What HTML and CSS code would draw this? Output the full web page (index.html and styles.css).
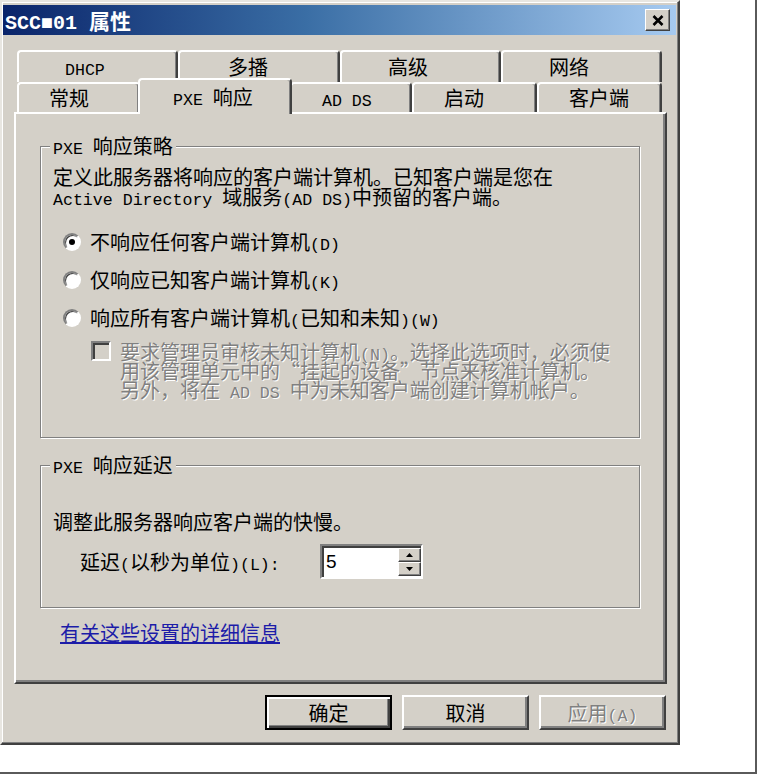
FILE: index.html
```html
<!DOCTYPE html>
<html lang="zh-CN">
<head>
<meta charset="utf-8">
<title>SCC■01 属性</title>
<link rel="stylesheet" href="styles.css">
</head>
<body>
<div class="frame">
  <div class="dialog">
    <div class="titlebar">
      <span class="title"><span class="m">SCC■01 </span>属性</span>
      <button class="close" aria-label="关闭">
        <svg width="12" height="11" viewBox="0 0 12 11"><path d="M1.5 1 L10.5 10 M10.5 1 L1.5 10" stroke="#000" stroke-width="2.6" fill="none"/></svg>
      </button>
    </div>

    <div class="tabs">
      <div class="tabrow back">
        <div class="tab"><span><span class="m">DHCP</span></span></div>
        <div class="tab"><span>多播</span></div>
        <div class="tab"><span>高级</span></div>
        <div class="tab"><span>网络</span></div>
      </div>
      <div class="tabrow front">
        <div class="tab t-general"><span>常规</span></div>
        <div class="tab t-pxe active"><span><span class="m">PXE </span>响应</span></div>
        <div class="tab t-adds"><span><span class="m">AD DS</span></span></div>
        <div class="tab t-boot"><span>启动</span></div>
        <div class="tab t-client"><span>客户端</span></div>
      </div>
    </div>

    <div class="panel">
      <div class="group g1">
        <div class="legend"><span class="m">PXE </span>响应策略</div>
        <div class="desc">定义此服务器将响应的客户端计算机。已知客户端是您在<br><span class="m">Active Directory </span>域服务<span class="m">(AD DS)</span>中预留的客户端。</div>
        <div class="radio first"><span class="rb on"></span><span>不响应任何客户端计算机<span class="m">(D)</span></span></div>
        <div class="radio"><span class="rb"></span><span>仅响应已知客户端计算机<span class="m">(K)</span></span></div>
        <div class="radio"><span class="rb"></span><span>响应所有客户端计算机<span class="m">(</span>已知和未知<span class="m">)(W)</span></span></div>
        <div class="check">
          <span class="cb"></span>
          <span class="check-text">要求管理员审核未知计算机<span class="m">(N)</span>。选择此选项时，必须使<br>用该管理单元中的“挂起的设备”节点来核准计算机。<br>另外，将在<span class="m"> AD DS </span>中为未知客户端创建计算机帐户。</span>
        </div>
      </div>

      <div class="group g2">
        <div class="legend"><span class="m">PXE </span>响应延迟</div>
        <div class="desc2">调整此服务器响应客户端的快慢。</div>
        <div class="delay">
          <label class="delay-label">延迟<span class="m">(</span>以秒为单位<span class="m">)(L):</span></label>
          <div class="spin">
            <span class="spin-value">5</span>
            <div class="spin-btns">
              <span class="spin-btn"><svg width="7" height="4" viewBox="0 0 7 4"><polygon points="3.5,0 7,4 0,4" fill="#000"/></svg></span>
              <span class="spin-btn"><svg width="7" height="4" viewBox="0 0 7 4"><polygon points="0,0 7,0 3.5,4" fill="#000"/></svg></span>
            </div>
          </div>
        </div>
      </div>

      <a class="link" href="#">有关这些设置的详细信息</a>
    </div>

    <div class="buttons">
      <button class="btn default">确定</button>
      <button class="btn">取消</button>
      <button class="btn" disabled>应用<span class="m">(A)</span></button>
    </div>
  </div>
</div>
</body>
</html>
```

FILE: styles.css
```css
* { box-sizing: border-box; }

html, body {
  margin: 0;
  padding: 0;
  background: #fff;
}

body {
  font-family: "Noto Sans CJK SC", "Noto Sans", sans-serif;
  font-size: 20px;
  line-height: 20px;
  color: #000;
}

.m {
  font-family: "Liberation Mono", "DejaVu Sans Mono", monospace;
  font-size: 16.6px;
  line-height: 10px;
}

.frame {
  width: 757px;
  height: 774px;
  border-right: 2px solid #5a5a5a;
  border-bottom: 2px solid #5a5a5a;
  background: #fff;
}

.dialog {
  width: 680px;
  height: 745px;
  background: #d4d0c8;
  border: 2px solid;
  border-color: #e8e6e1 #404040 #404040 #e8e6e1;
  box-shadow: inset -1px -1px 0 #808080, inset 1px 1px 0 #fff;
  padding: 3px 2px 0 1px;
}

/* title bar */
.titlebar {
  height: 30px;
  display: flex;
  align-items: center;
  justify-content: space-between;
  padding: 0 6px 0 2px;
  background: linear-gradient(to right, #0a246a 0%, #3a6ea5 45%, #a6caf0 100%);
}

.title {
  color: #fff;
  font-weight: 700;
  font-size: 21px;
  white-space: nowrap;
}

.title .m {
  font-size: 20px;
}

.close {
  width: 25px;
  height: 22px;
  padding: 0;
  background: #d4d0c8;
  border: 1px solid;
  border-color: #fff #404040 #404040 #fff;
  box-shadow: inset -1px -1px 0 #808080;
  display: flex;
  align-items: center;
  justify-content: center;
}

/* tabs */
.tabs {
  margin: 15px 0 0 14px;
  width: 645px;
}

.tabrow {
  display: flex;
}

.tabrow.back { height: 32px; }
.tabrow.front { height: 30px; }

.tab {
  height: 100%;
  display: flex;
  align-items: center;
  background: #d4d0c8;
  border-top: 2px solid #fff;
  border-left: 2px solid #fff;
  border-right: 2px solid #404040;
  box-shadow: inset -1px 0 0 #808080;
  border-radius: 4px 4px 0 0;
  white-space: nowrap;
}

.back .tab {
  width: 161px;
  padding-left: 46px;
}

.back .tab:nth-child(2) { width: 162px; padding-left: 48px; }

.front .tab { padding-left: 30px; }

.t-general { width: 123px; }
.t-adds { width: 122px; padding-left: 26px; }
.t-boot { width: 125px; }
.t-client { width: 125px; }

.tab.active {
  width: 154px;
  height: 36px;
  margin: -4px -2px 0;
  padding-left: 33px;
  position: relative;
  z-index: 2;
}

/* panel */
.panel {
  margin-left: 11px;
  width: 653px;
  height: 572px;
  border: 2px solid;
  border-color: #fff #404040 #404040 #fff;
  box-shadow: inset -2px -2px 0 #808080;
  padding: 0 0 0 24px;
}

.group {
  width: 600px;
  border: 1px solid #808080;
  box-shadow: 1px 1px 0 #fff, inset 1px 1px 0 #fff;
  padding: 0 0 0 12px;
}

.g1 {
  margin-top: 32px;
  padding-bottom: 38px;
}

.g2 {
  margin-top: 27px;
  padding-bottom: 28px;
}

.legend {
  display: table;
  margin: -11px 0 0 -3px;
  padding: 0 3px;
  background: #d4d0c8;
  white-space: nowrap;
}

.desc {
  margin-top: 11px;
  white-space: nowrap;
}

.radio {
  display: flex;
  align-items: center;
  height: 20px;
  margin: 18px 0 0 10px;
  white-space: nowrap;
}

.radio.first { margin-top: 25px; }

.rb {
  flex: none;
  width: 18px;
  height: 18px;
  margin-right: 9px;
  border-radius: 50%;
  background: #fff;
  border: 2px solid;
  border-color: #808080 #fff #fff #808080;
  box-shadow: inset 1px 1px 0 #404040;
  display: flex;
  align-items: center;
  justify-content: center;
}

.rb.on::after {
  content: "";
  width: 6px;
  height: 6px;
  border-radius: 50%;
  background: #000;
}

.check {
  display: flex;
  align-items: flex-start;
  margin: 14px 0 0 38px;
}

.cb {
  flex: none;
  width: 20px;
  height: 20px;
  margin: -1px 9px 0 0;
  background: #d4d0c8;
  border: 2px solid;
  border-color: #808080 #fff #fff #808080;
  box-shadow: inset 2px 2px 0 #404040, inset -1px -1px 0 #d4d0c8;
}

.check-text {
  color: #808080;
  text-shadow: 1px 1px 0 #fff;
  line-height: 19px;
  white-space: nowrap;
}

.desc2 {
  margin-top: 37px;
  white-space: nowrap;
}

.delay {
  display: flex;
  align-items: center;
  height: 35px;
  margin: 12px 0 0 27px;
}

.delay-label {
  width: 240px;
  white-space: nowrap;
}

.spin {
  display: flex;
  width: 103px;
  height: 35px;
  background: #fff;
  border: 2px solid;
  border-color: #808080 #fff #fff #808080;
  box-shadow: inset 2px 2px 0 #404040;
  padding: 2px 0 1px 2px;
}

.spin-value {
  flex: 1;
  font-family: "Liberation Sans", sans-serif;
  font-size: 19px;
  line-height: 28px;
  padding-left: 2px;
}

.spin-btns {
  width: 23px;
  display: flex;
  flex-direction: column;
}

.spin-btn {
  flex: 1;
  display: flex;
  align-items: center;
  justify-content: center;
  background: #d4d0c8;
  border: 1px solid;
  border-color: #fff #404040 #404040 #fff;
  box-shadow: inset -1px -1px 0 #808080;
}

.link {
  display: inline-block;
  margin: 15px 0 0 20px;
  color: #1c1ca8;
  text-decoration: underline;
  white-space: nowrap;
}

/* buttons */
.buttons {
  display: flex;
  justify-content: flex-end;
  gap: 10px;
  margin-top: 11px;
  padding-right: 10px;
}

.btn {
  width: 127px;
  height: 35px;
  padding: 0;
  font: inherit;
  color: #000;
  background: #d4d0c8;
  border: 2px solid;
  border-color: #fff #404040 #404040 #fff;
  box-shadow: inset -2px -2px 0 #808080;
}

.btn.default {
  border: 2px solid #000;
  box-shadow: inset 2px 2px 0 #fff, inset -2px -2px 0 #404040, inset -3px -3px 0 #808080;
}

.btn:disabled {
  color: #808080;
  text-shadow: 1px 1px 0 #fff;
}
```
